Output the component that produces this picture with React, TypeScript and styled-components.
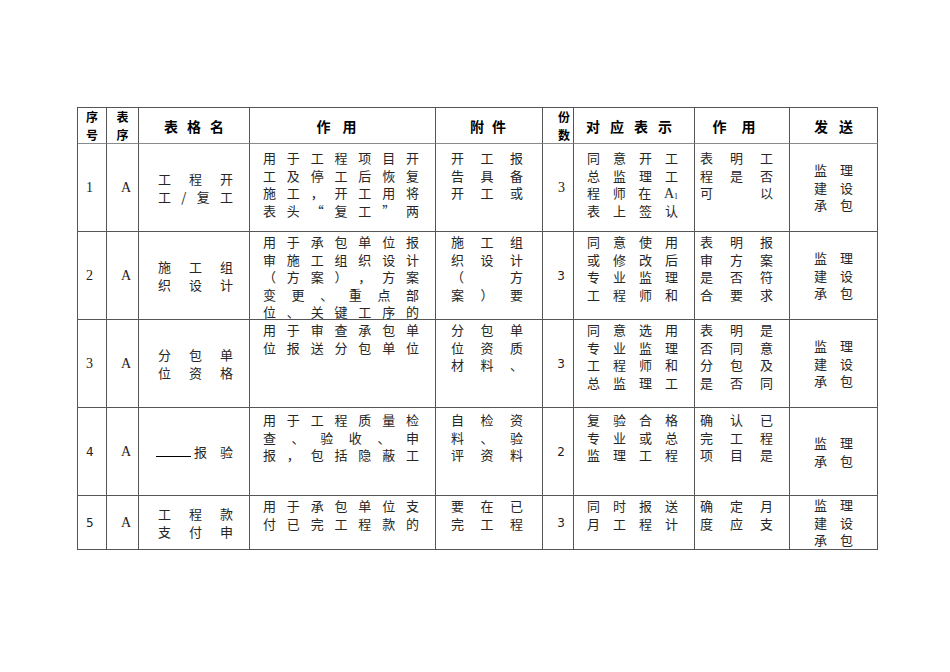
import React from 'react';
import styled, { createGlobalStyle } from 'styled-components';

const GlobalStyle = createGlobalStyle`
  html, body { margin: 0; padding: 0; background: #fff; }
  body { font-family: "Noto Sans CJK SC", "Noto Sans", sans-serif; color: #222; }
`;

const Page = styled.div`
  width: 950px;
  height: 672px;
  box-sizing: border-box;
  padding: 107px 0 0 77px;
`;

const Grid = styled.div`
  display: grid;
  grid-template-columns: 29px 32px 111px 186px 107px 31px 121px 95px 88px;
  grid-template-rows: 36px 88px 88px 88px 88px 54px;
  width: 801px;
  box-sizing: border-box;
  border-top: 1px solid #555;
  border-left: 1px solid #555;
`;

const CellBase = styled.div`
  box-sizing: border-box;
  border-right: 1px solid #555;
  border-bottom: 1px solid #555;
  overflow: hidden;
  display: flex;
  flex-direction: column;
  min-width: 0;
  min-height: 0;
`;

const HeadCell = styled(CellBase)<{ $shift?: number; $stack?: 'center' | 'right' }>`
  border-bottom-color: #8a8a8a;
  justify-content: center;
  align-items: ${(p) => (p.$stack === 'right' ? 'flex-end' : 'center')};
  padding-right: ${(p) => p.$shift || 0}px;
  font-weight: 700;
  font-size: ${(p) => (p.$stack ? 12 : 14)}px;
  line-height: ${(p) => (p.$stack ? 17.5 : 18)}px;
  color: #000;
`;

const HeadWord = styled.div<{ $gap: number }>`
  display: flex;
  gap: ${(p) => p.$gap}px;
`;

const NumCell = styled(CellBase)<{ $pad: number; $sans?: boolean; $right?: boolean }>`
  justify-content: center;
  align-items: ${(p) => (p.$right ? 'flex-end' : 'flex-start')};
  padding: ${(p) => (p.$right ? `0 ${p.$pad}px 0 0` : `0 0 0 ${p.$pad}px`)};
  font-family: ${(p) => (p.$sans ? '"DejaVu Sans", sans-serif' : '"Liberation Serif", serif')};
  font-size: ${(p) => (p.$sans ? 12 : 14)}px;
  color: #222;
`;

const TextCell = styled(CellBase)<{ $top: number; $l: number; $r: number; $center?: boolean }>`
  justify-content: ${(p) => (p.$center ? 'center' : 'flex-start')};
  padding: ${(p) => (p.$center ? 0 : p.$top)}px ${(p) => p.$r}px 0 ${(p) => p.$l}px;
  font-size: 13px;
  line-height: 17.6px;
  color: #262626;
`;

const SendCell = styled(CellBase)`
  justify-content: center;
  align-items: center;
  font-size: 13px;
  line-height: 17.6px;
  color: #262626;
`;

const Line = styled.div`
  display: flex;
  justify-content: space-between;
  align-items: baseline;
  flex-shrink: 0;
  height: 17.6px;
  white-space: nowrap;
`;

const SendLine = styled.div`
  display: flex;
  gap: 13px;
  flex-shrink: 0;
`;

const Latin = styled.span`
  font-family: "Liberation Serif", serif;
  font-size: 14px;
  line-height: 1;
  sub {
    font-size: 8px;
    line-height: 0;
    vertical-align: -1px;
  }
`;

const BlankWrap = styled.span`
  display: inline-flex;
  align-items: flex-end;
  margin-left: -2px;
`;

const Blank = styled.span`
  display: inline-block;
  width: 35px;
  height: 13px;
  border-bottom: 1px solid #000;
  margin-right: 3px;
  margin-bottom: 3px;
`;

type LineT = string | React.ReactNode[];

type RowT = {
  no: string;
  sansNo?: boolean;
  name: LineT[];
  use: LineT[];
  att: LineT[];
  count: string;
  sansCount?: boolean;
  corr: LineT[];
  role: LineT[];
  send: string[];
  top: number;
};

const rows: RowT[] = [
  {
    no: '1',
    name: ['工程开', '工/复工'],
    use: ['用于工程项目开', '工及停工后恢复', '施工，开工用将', '表头“复工”两'],
    att: ['开工报', '告具备', '开工或'],
    count: '3',
    corr: [
      '同意开工',
      '总监理工',
      [
        '程',
        '师',
        '在',
        <Latin key="a1">
          A<sub>1</sub>
        </Latin>,
      ],
      '表上签认',
    ],
    role: ['表明工', '程是否', '可以'],
    send: ['监理', '建设', '承包'],
    top: 5,
  },
  {
    no: '2',
    name: ['施工组', '织设计'],
    use: ['用于承包单位报', '审施工组织设计', '（方案），方案', '变更、重点部', '位、关键工序的'],
    att: ['施工组', '织设计', '（方', '案）要'],
    count: '3',
    sansCount: true,
    corr: ['同意使用', '或修改后', '专业监理', '工程师和'],
    role: ['表明报', '审方案', '是否符', '合要求'],
    send: ['监理', '建设', '承包'],
    top: 1,
  },
  {
    no: '3',
    name: ['分包单', '位资格'],
    use: ['用于审查承包单', '位报送分包单位'],
    att: ['分包单', '位资质', '材料、'],
    count: '3',
    sansCount: true,
    corr: ['同意选用', '专业监理', '工程师和', '总监理工'],
    role: ['表明是', '否同意', '分包及', '是否同'],
    send: ['监理', '建设', '承包'],
    top: 1,
  },
  {
    no: '4',
    sansNo: true,
    name: [
      [
        <BlankWrap key="b">
          <Blank />报
        </BlankWrap>,
        '验',
      ],
    ],
    use: ['用于工程质量检', '查、验收、申', '报，包括隐蔽工'],
    att: ['自检资', '料、验', '评资料'],
    count: '2',
    sansCount: true,
    corr: ['复验合格', '专业或总', '监理工程'],
    role: ['确认已', '完工程', '项目是'],
    send: ['监理', '承包'],
    top: 3,
  },
  {
    no: '5',
    sansNo: true,
    name: ['工程款', '支付申'],
    use: ['用于承包单位支', '付已完工程款的'],
    att: ['要在已', '完工程'],
    count: '3',
    sansCount: true,
    corr: ['同时报送', '月工程计'],
    role: ['确定月', '度应支'],
    send: ['监理', '建设', '承包'],
    top: 1,
  },
];

const items = (l: LineT): React.ReactNode[] =>
  typeof l === 'string'
    ? Array.from(l).map((c, i) => <span key={i}>{c}</span>)
    : l.map((n, i) => (typeof n === 'string' ? <span key={`s${i}`}>{n}</span> : n));

const Lines: React.FC<{ lines: LineT[] }> = ({ lines }) => (
  <>
    {lines.map((l, i) => (
      <Line key={i}>{items(l)}</Line>
    ))}
  </>
);

const Word: React.FC<{ text: string; gap: number }> = ({ text, gap }) => (
  <HeadWord $gap={gap}>
    {Array.from(text).map((c, i) => (
      <span key={i}>{c}</span>
    ))}
  </HeadWord>
);

export default function App() {
  return (
    <>
      <GlobalStyle />
      <Page>
        <Grid>
          <HeadCell $stack="center">
            <span>序</span>
            <span>号</span>
          </HeadCell>
          <HeadCell $stack="center" $shift={-6}>
            <span>表</span>
            <span>序</span>
          </HeadCell>
          <HeadCell>
            <Word text="表格名" gap={9} />
          </HeadCell>
          <HeadCell $shift={12}>
            <Word text="作用" gap={12} />
          </HeadCell>
          <HeadCell $shift={2}>
            <Word text="附件" gap={8} />
          </HeadCell>
          <HeadCell $stack="right" $shift={3}>
            <span>份</span>
            <span>数</span>
          </HeadCell>
          <HeadCell $shift={10}>
            <Word text="对应表示" gap={10} />
          </HeadCell>
          <HeadCell $shift={16}>
            <Word text="作用" gap={15} />
          </HeadCell>
          <HeadCell>
            <Word text="发送" gap={11} />
          </HeadCell>

          {rows.map((r) => (
            <React.Fragment key={r.no}>
              <NumCell $pad={8} $sans={r.sansNo}>
                {r.no}
              </NumCell>
              <NumCell $pad={14}>A</NumCell>
              <TextCell $top={r.top} $l={19} $r={16} $center>
                <Lines lines={r.name} />
              </TextCell>
              <TextCell $top={r.top} $l={13} $r={16}>
                <Lines lines={r.use} />
              </TextCell>
              <TextCell $top={r.top} $l={15} $r={19}>
                <Lines lines={r.att} />
              </TextCell>
              <NumCell $pad={8} $right $sans={r.sansCount}>
                {r.count}
              </NumCell>
              <TextCell $top={r.top} $l={13} $r={16}>
                <Lines lines={r.corr} />
              </TextCell>
              <TextCell $top={r.top} $l={5} $r={16}>
                <Lines lines={r.role} />
              </TextCell>
              <SendCell>
                {r.send.map((s, i) => (
                  <SendLine key={i}>
                    {Array.from(s).map((c, j) => (
                      <span key={j}>{c}</span>
                    ))}
                  </SendLine>
                ))}
              </SendCell>
            </React.Fragment>
          ))}
        </Grid>
      </Page>
    </>
  );
}
